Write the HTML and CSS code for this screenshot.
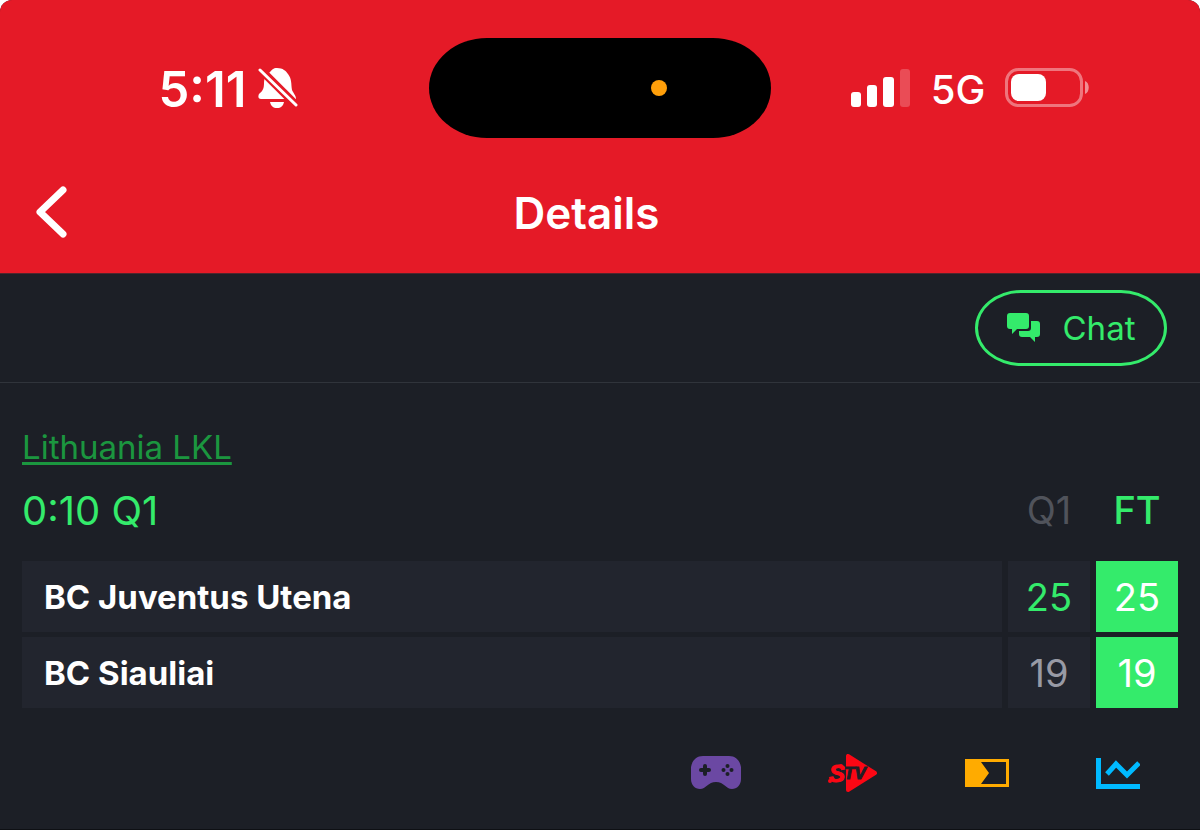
FILE: index.html
```html
<!DOCTYPE html>
<html lang="en">
<head>
    <meta charset="UTF-8">
    <meta name="viewport" content="width=device-width, initial-scale=1.0">
    <title>Details</title>
    <link rel="stylesheet" href="styles.css">
</head>
<body>
    <div class="app">
        <header class="top">
            <div class="status-bar">
                <div class="status-left">
                    <span class="time">5:11</span>
                    <svg class="bell" viewBox="0 0 40 42" aria-hidden="true">
                        <path fill="#fff" d="M12 5C14 3 15 1 19 1c6 0 9 3 11 6 4 5 3 10 4 16 1 3 4 5 4 9H3c-3 0-3-3-2-5 4-3 5-6 5-11 0-5 2-8 6-11z"/>
                        <path fill="#fff" d="M12 35h14c-1 4-3 6-7 6s-6-2-7-6z"/>
                        <path stroke="#e51a27" stroke-width="8" d="M1 1l40 40"/>
                        <path stroke="#fff" stroke-width="3" stroke-linecap="round" d="M2 3l36 35"/>
                    </svg>
                </div>
                <div class="island"><span class="mic-dot"></span></div>
                <div class="status-right">
                    <svg class="signal" viewBox="0 0 60 38" fill="#fff" aria-hidden="true">
                        <rect x="0" y="23" width="10" height="15" rx="3"/>
                        <rect x="16" y="16" width="10" height="22" rx="3"/>
                        <rect x="32" y="8" width="11" height="30" rx="3"/>
                        <rect x="49" y="0" width="10" height="38" rx="3" opacity=".22"/>
                    </svg>
                    <span class="network">5G</span>
                    <svg class="battery" viewBox="0 0 85 40" aria-hidden="true">
                        <rect x="1.500" y="1.500" width="75" height="36" rx="12" fill="none" stroke="#fff" stroke-width="3" opacity=".4"/>
                        <rect x="6" y="6" width="35" height="27" rx="8" fill="#fff"/>
                        <path d="M80 13c5 2 5 11 0 13z" fill="#fff" opacity=".5"/>
                    </svg>
                </div>
            </div>
            <div class="nav-bar">
                <button class="back" type="button" aria-label="Back">
                    <svg viewBox="0 0 32 54" fill="none" stroke="#fff" stroke-width="7" stroke-linecap="round" stroke-linejoin="round" aria-hidden="true">
                        <path d="M27 4L4 26l23 22"/>
                    </svg>
                </button>
                <h1 class="title">Details</h1>
            </div>
        </header>

        <div class="toolbar">
            <button class="chat" type="button">
                <svg viewBox="0 0 34 30" fill="#34eb6b" aria-hidden="true">
                    <path d="M3 0h16c2 0 3 1 3 3v10c0 2-1 3-3 3h-9l-5 5v-5H3c-2 0-3-1-3-3V3c0-2 1-3 3-3z"/>
                    <path d="M24 8h6c2 0 3 1 3 3v10c0 2-1 3-3 3h-2v5l-5-5h-8c-2 0-3-1-3-3v-3h9c2 0 3-1 3-3z"/>
                </svg>
                Chat
            </button>
        </div>

        <main class="match">
            <a class="league" href="#">Lithuania LKL</a>
            <table class="score">
                <thead>
                    <tr>
                        <th class="clock" scope="col">0:10 Q1</th>
                        <th class="period" scope="col">Q1</th>
                        <th class="period total-head" scope="col">FT</th>
                    </tr>
                </thead>
                <tbody>
                    <tr>
                        <th class="team" scope="row">BC Juventus Utena</th>
                        <td class="leading">25</td>
                        <td class="total">25</td>
                    </tr>
                    <tr>
                        <th class="team" scope="row">BC Siauliai</th>
                        <td>19</td>
                        <td class="total">19</td>
                    </tr>
                </tbody>
            </table>
            <div class="actions">
                <button type="button" aria-label="Games">
                    <svg width="50" height="38" viewBox="0 0 50 38" aria-hidden="true">
                        <path fill="#6b48a3" d="M12 2h26c7 0 11 5 12 11v12c0 6-4 10-9 10-6 0-8-7-16-7s-10 7-16 7c-5 0-9-4-9-10V13C1 7 5 2 12 2z"/>
                        <path stroke="#1c1f26" stroke-width="4" stroke-linecap="round" d="M10 16h8M14 12v8"/>
                        <g fill="#1c1f26">
                            <circle cx="36.500" cy="12" r="2"/>
                            <circle cx="32.500" cy="16" r="2"/>
                            <circle cx="40.500" cy="16" r="2"/>
                            <circle cx="36.500" cy="20" r="2"/>
                        </g>
                    </svg>
                </button>
                <button type="button" aria-label="Live stream">
                    <svg width="50" height="38" viewBox="0 0 50 38" aria-hidden="true">
                        <path fill="#fb0714" stroke="#fb0714" stroke-width="4" stroke-linejoin="round" d="M20 2v34l27-17z"/>
                        <text class="logo-s" x="1" y="28">S</text>
                        <circle cx="2" cy="27" r="2" fill="#fb0714"/>
                        <circle cx="13" cy="12" r="2" fill="#fb0714"/>
                        <text class="logo-tv" x="16" y="25">TV</text>
                    </svg>
                </button>
                <button type="button" aria-label="Bets">
                    <svg width="44" height="38" viewBox="0 0 44 38" aria-hidden="true">
                        <path fill="#ffab00" fill-rule="evenodd" d="M0 5h44v28H0zM16 8l8 11-8 11h25V8z"/>
                    </svg>
                </button>
                <button type="button" aria-label="Statistics">
                    <svg width="44" height="38" viewBox="0 0 44 38" fill="none" stroke="#00baff" stroke-width="5" aria-hidden="true">
                        <path d="M2.500 4v28.500H44"/>
                        <path d="M11 20l9-10 11 11 12-12"/>
                    </svg>
                </button>
            </div>
        </main>
    </div>
</body>
</html>
```
FILE: styles.css
```css
* {
    box-sizing: border-box;
}

body {
    margin: 0;
    background: #fff;
    font-family: Inter, "Liberation Sans", sans-serif;
}

button {
    padding: 0;
    background: none;
    border: none;
    cursor: pointer;
}

svg {
    display: block;
}

.app {
    min-height: 100vh;
    background: #1c1f26;
    border-bottom: 1px solid #0e1014;
    border-radius: 12px 12px 0 0;
    overflow: hidden;
}

/* Header */
.top {
    background: #e51a27;
    color: #fff;
    border-bottom: 1px solid #50252c;
}

.status-bar {
    display: grid;
    grid-template-columns: 1fr 342px 1fr;
    align-items: center;
    padding-top: 38px;
}

.status-left,
.status-right {
    display: flex;
    align-items: center;
    justify-content: center;
}

.status-left {
    gap: 12px;
    padding-left: 28px;
}

.status-right {
    gap: 20px;
    padding-right: 30px;
}

.time,
.network {
    padding-top: 4px;
    line-height: 56px;
}

.time {
    font-size: 49px;
    font-weight: 600;
}

.bell {
    width: 40px;
    height: 42px;
}

.island {
    display: flex;
    align-items: center;
    justify-content: flex-end;
    height: 100px;
    padding-right: 104px;
    background: #000;
    border-radius: 58px / 50px;
}

.mic-dot {
    width: 16px;
    height: 16px;
    background: #ff9f0a;
    border-radius: 50%;
}

.signal {
    width: 60px;
    height: 38px;
}

.network {
    font-size: 40px;
    font-weight: 500;
}

.battery {
    width: 85px;
    height: 40px;
}

.nav-bar {
    display: flex;
    align-items: center;
    height: 135px;
    padding: 15px 95px 0 36px;
}

.back svg {
    width: 32px;
    height: 54px;
}

.title {
    flex: 1;
    margin: 0;
    font-size: 44px;
    font-weight: 600;
    line-height: 56px;
    text-align: center;
}

/* Toolbar */
.toolbar {
    display: flex;
    justify-content: flex-end;
    padding: 16px 33px;
    border-bottom: 1px solid #30343b;
}

.chat {
    display: flex;
    align-items: center;
    justify-content: center;
    gap: 22px;
    width: 192px;
    height: 76px;
    color: #34eb6b;
    font-family: inherit;
    font-size: 33px;
    border: 3px solid #34eb6b;
    border-radius: 46px / 38px;
}

.chat svg {
    width: 34px;
    height: 30px;
}

/* Match */
.match {
    padding: 42px 16px 16px;
}

.league {
    display: inline-block;
    margin-left: 6px;
    color: #1b963f;
    font-size: 33px;
    line-height: 44px;
    text-decoration-thickness: 3px;
    text-underline-offset: 3px;
}

.score {
    width: 100%;
    border-spacing: 6px 5px;
    table-layout: fixed;
    font-size: 38px;
}

.score th,
.score td {
    height: 71px;
    padding: 0;
    font-weight: 400;
    text-align: center;
}

.score thead th {
    height: 82px;
    padding-bottom: 10px;
}

.score .clock {
    color: #34eb6b;
    font-size: 40px;
    text-align: left;
}

.score .period {
    width: 82px;
    color: #50535b;
}

.score .total-head {
    color: #34eb6b;
    font-weight: 500;
}

.score .team,
.score td {
    background: #22252e;
}

.score .team {
    padding-left: 22px;
    color: #fff;
    font-size: 33px;
    font-weight: 700;
    text-align: left;
}

.score td {
    color: #989aa5;
}

.score .leading {
    color: #34eb6b;
}

.score .total {
    background: #34eb6b;
    color: #fff;
}

.actions {
    display: flex;
    justify-content: flex-end;
    gap: 87px;
    padding: 41px 44px 0;
}

.logo-s,
.logo-tv {
    font-family: "Liberation Sans", sans-serif;
    font-style: italic;
    font-weight: 700;
}

.logo-s {
    fill: #fb0714;
    stroke: #fb0714;
    stroke-width: 1px;
    font-size: 24px;
}

.logo-tv {
    fill: #1c1f26;
    stroke: #1c1f26;
    stroke-width: 1px;
    font-size: 17px;
}
```
